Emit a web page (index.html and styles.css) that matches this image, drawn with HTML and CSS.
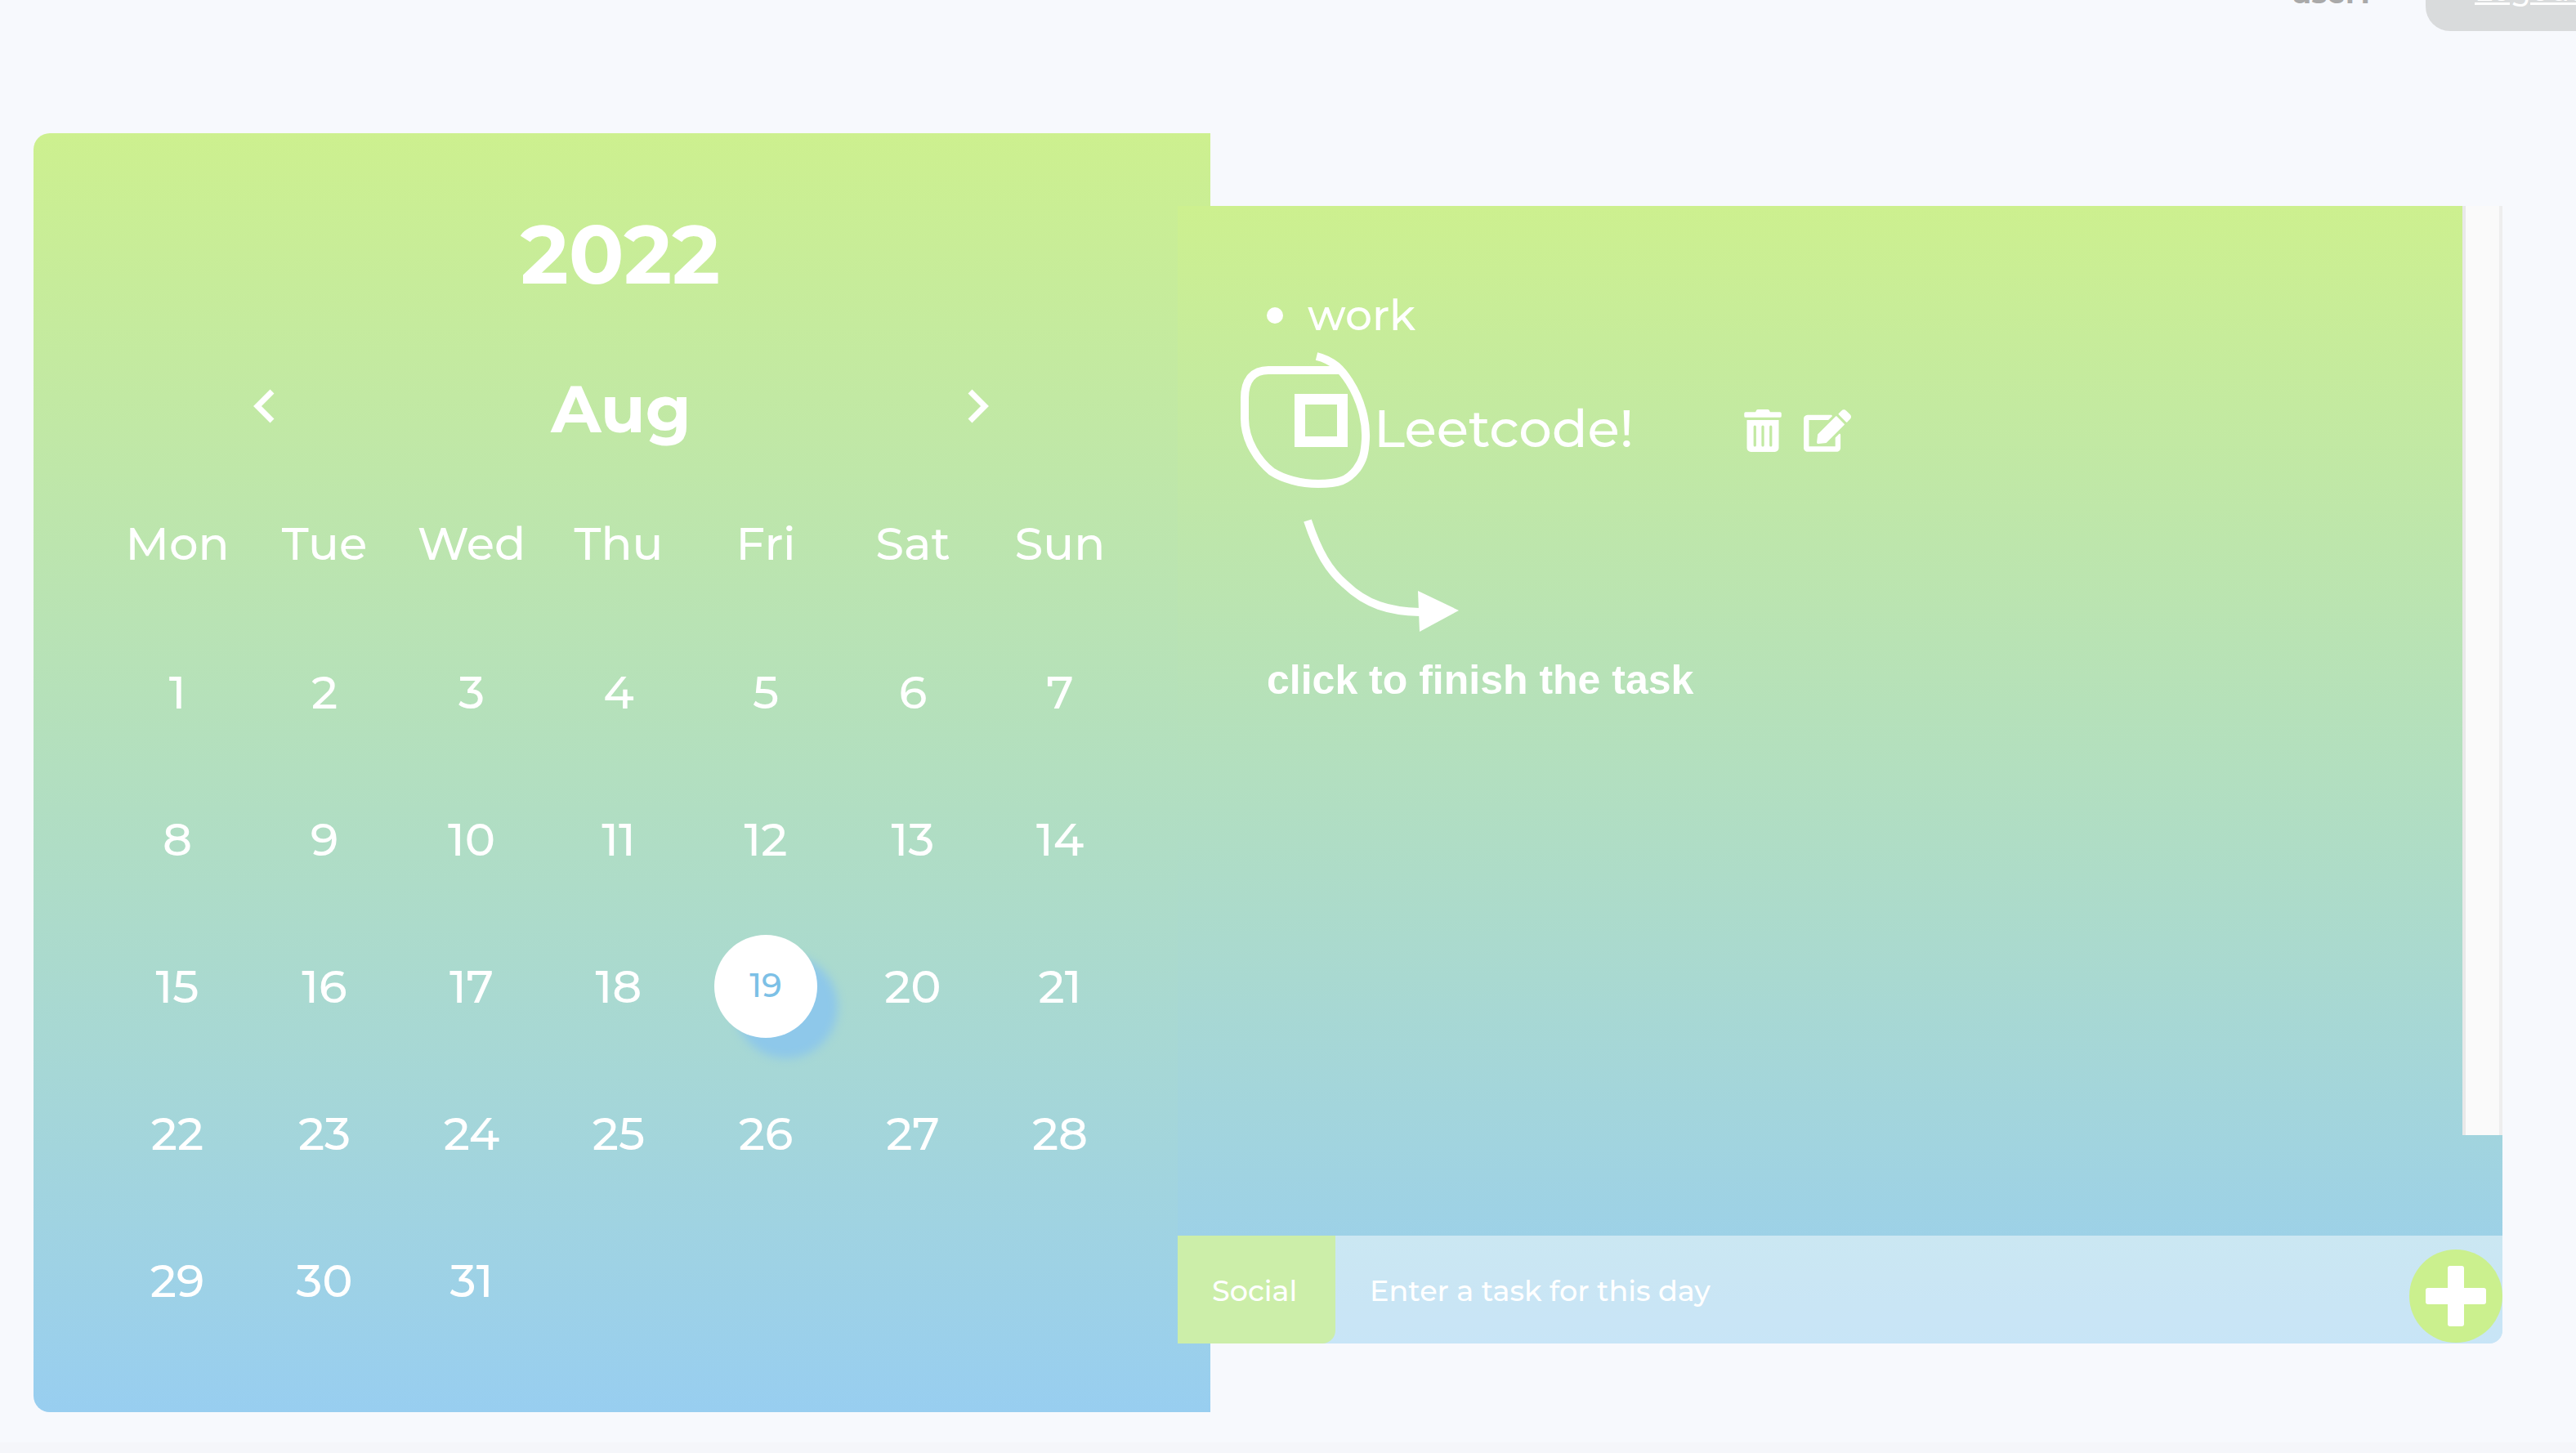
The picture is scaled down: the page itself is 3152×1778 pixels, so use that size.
FILE: index.html
```html
<!DOCTYPE html>
<html lang="en">
<head>
<meta charset="utf-8">
<meta name="viewport" content="width=device-width, initial-scale=1">
<title>Calendar tasks</title>
<link rel="stylesheet" href="styles.css">
</head>
<body>
<header class="topbar">
  <span class="user">user1</span>
  <a class="logout" href="#">Logout</a>
</header>
<main class="planner">
  <section class="calendar">
    <h1 class="year">2022</h1>
    <div class="month-nav">
      <button class="arrow" type="button" aria-label="Previous month"><svg viewBox="0 0 26 42"><path d="M23 3L5 21l18 18"/></svg></button>
      <h2 class="month">Aug</h2>
      <button class="arrow" type="button" aria-label="Next month"><svg viewBox="0 0 26 42"><path d="M3 3l18 18L3 39"/></svg></button>
    </div>
    <table class="days">
      <thead><tr><th>Mon</th><th>Tue</th><th>Wed</th><th>Thu</th><th>Fri</th><th>Sat</th><th>Sun</th></tr></thead>
      <tbody>
        <tr><td>1</td><td>2</td><td>3</td><td>4</td><td>5</td><td>6</td><td>7</td></tr>
        <tr><td>8</td><td>9</td><td>10</td><td>11</td><td>12</td><td>13</td><td>14</td></tr>
        <tr><td>15</td><td>16</td><td>17</td><td>18</td><td><span class="today">19</span></td><td>20</td><td>21</td></tr>
        <tr><td>22</td><td>23</td><td>24</td><td>25</td><td>26</td><td>27</td><td>28</td></tr>
        <tr><td>29</td><td>30</td><td>31</td><td></td><td></td><td></td><td></td></tr>
      </tbody>
    </table>
  </section>
  <section class="tasks">
    <div class="scroll-area">
      <div class="list">
        <h3 class="category">work</h3>
        <div class="task">
          <input class="check" type="checkbox" id="task-1">
          <label class="name" for="task-1">Leetcode!</label>
          <div class="actions">
            <button class="icon" type="button" aria-label="Delete"><svg width="46" height="52" viewBox="0 0 448 512"><path d="M32 464a48 48 0 0 0 48 48h288a48 48 0 0 0 48-48V128H32zm272-256a16 16 0 0 1 32 0v224a16 16 0 0 1-32 0zm-96 0a16 16 0 0 1 32 0v224a16 16 0 0 1-32 0zm-96 0a16 16 0 0 1 32 0v224a16 16 0 0 1-32 0zM432 32H312l-9.400-18.700A24 24 0 0 0 281.100 0H166.800a23.720 23.720 0 0 0-21.400 13.300L136 32H16A16 16 0 0 0 0 48v32a16 16 0 0 0 16 16h416a16 16 0 0 0 16-16V48a16 16 0 0 0-16-16z"/></svg></button>
            <button class="icon" type="button" aria-label="Edit"><svg width="58" height="52" viewBox="0 0 576 512"><path d="M402.600 83.200l90.200 90.200c3.800 3.800 3.800 10 0 13.800L274.400 405.600l-92.800 10.300c-12.400 1.400-22.900-9.100-21.500-21.500l10.300-92.800L388.800 83.200c3.800-3.800 10-3.800 13.800 0zm162-22.900l-48.800-48.800c-15.200-15.200-39.900-15.200-55.200 0l-35.400 35.400c-3.800 3.800-3.800 10 0 13.800l90.200 90.200c3.800 3.800 10 3.800 13.800 0l35.400-35.400c15.200-15.300 15.200-40 0-55.200zM384 346.200V448H64V128h229.800c3.200 0 6.200-1.300 8.500-3.500l40-40c7.600-7.600 2.200-20.500-8.500-20.500H48C21.500 64 0 85.500 0 112v352c0 26.500 21.500 48 48 48h352c26.500 0 48-21.500 48-48V306.200c0-10.700-12.900-16-20.500-8.500l-40 40c-2.200 2.300-3.500 5.300-3.500 8.500z"/></svg></button>
          </div>
        </div>
      </div>
      <div class="track"></div>
      <div class="hint">
        <svg class="sketch" width="280" height="360" viewBox="1510 422 280 360" aria-hidden="true">
          <path class="ink" d="M1611 436C1632 441 1642 453 1651 467C1665 489 1672 515 1671 537C1670 555 1668 563 1660 574C1649 588 1638 592 1613 592C1591 592 1570 586 1556 577C1540 564 1523 540 1523 512V487C1523 464 1534 453 1552 453H1641"/>
          <path class="ink" d="M1600 637C1613 676 1626 698 1646 715C1672 740 1700 748 1737 749"/>
          <path class="head" d="M1735 723L1785 747L1737 773Z"/>
        </svg>
        <p class="hint-text">click to finish the task</p>
      </div>
    </div>
    <form class="entry">
      <select class="kind" aria-label="Category"><option>Social</option><option>work</option></select>
      <input class="field" type="text" placeholder="Enter a task for this day" aria-label="New task">
      <button class="add" type="button" aria-label="Add task"><svg width="74" height="74" viewBox="0 0 74 74"><rect x="27" width="20" height="74" rx="3"/><rect y="27" width="74" height="20" rx="3"/></svg></button>
    </form>
  </section>
</main>
<footer class="foot"></footer>
</body>
</html>
```
FILE: styles.css
```css
:root {
  --fade: linear-gradient(180deg, #cdf08f, #98cef0);
  --page: #f7f9fd;
}
* { box-sizing: border-box; }
body {
  margin: 0;
  display: flex;
  flex-direction: column;
  min-height: 100vh;
  overflow: hidden;
  background: var(--page);
  color: #fff;
  font-family: Montserrat, Inter, sans-serif;
}
h1, h2, h3, p { margin: 0; }
button { border: 0; padding: 0; background: none; color: inherit; cursor: pointer; }

.topbar {
  display: flex;
  justify-content: flex-end;
  align-items: center;
  gap: 68px;
  height: 100px;
  margin: -62px -64px 0 0;
  font-size: 36px;
}
.user { color: #a9a9a9; font-weight: 700; padding-top: 6px; }
.logout {
  width: 248px;
  padding: 28px 60px;
  line-height: 44px;
  border-radius: 30px;
  background: #d9dbdc;
  color: #fff;
  font-weight: 500;
}

.planner {
  display: grid;
  grid-template-columns: 1400fr 1621fr;
  align-items: start;
  padding: 125px 90px 37px 41px;
}
.calendar {
  margin-right: -40px;
  padding: 88px 94px 71px 86px;
  border-radius: 20px 0 0 20px;
  background: var(--fade);
}
.year { padding-left: 4px; text-align: center; font-size: 100px; font-weight: 700; line-height: 120px; }
.month-nav {
  display: flex;
  align-items: center;
  justify-content: space-between;
  margin: 80px 0 22px;
  padding: 0 160px 0 166px;
}
.month { font-size: 80px; font-weight: 700; line-height: 100px; }
.arrow { display: flex; justify-content: center; width: 60px; padding-bottom: 8px; }
.arrow svg { width: 26px; height: 42px; fill: none; stroke: #fff; stroke-width: 7; }
.days { width: 100%; table-layout: fixed; border-collapse: collapse; font-size: 56px; }
.days th, .days td { height: 180px; padding: 0; text-align: center; font-weight: 500; }
.days th { height: 184px; }
.today {
  display: grid;
  place-items: center;
  width: 126px;
  height: 126px;
  margin: 0 auto;
  padding-bottom: 4px;
  border-radius: 50%;
  background: #fff;
  color: #7cc0e6;
  font-size: 40px;
  box-shadow: 25px 25px 12px #8ec8ea;
}

.tasks {
  position: relative;
  margin-top: 89px;
  border-radius: 0 0 16px 0;
  background: var(--fade);
}
.scroll-area { display: flex; min-height: 1137px; position: relative; }
.list { flex: 1; padding-top: 102px; }
.track {
  width: 49px;
  border-left: 4px solid #e9e9e9;
  border-right: 4px solid #eee;
  background: #fafafa;
}
.category {
  display: flex;
  align-items: center;
  gap: 30px;
  padding-left: 109px;
  font-size: 52px;
  font-weight: 500;
  line-height: 64px;
}
.category::before { content: ""; width: 20px; height: 20px; border-radius: 50%; background: #fff; }
.task { display: flex; align-items: baseline; margin-top: 64px; padding-left: 143px; }
.check { appearance: none; width: 65px; height: 65px; margin: 0 32px 0 0; border: 13px solid #fff; }
.name { width: 453px; font-size: 64px; font-weight: 500; line-height: 80px; }
.actions { display: flex; align-self: center; gap: 27px; padding-top: 8px; }
.icon { display: flex; }
.icon svg, .add svg { fill: #fff; }

.hint { position: absolute; left: 69px; top: 170px; }
.sketch { display: block; }
.ink { fill: none; stroke: #fff; stroke-width: 10; }
.head { fill: #fff; }
.hint-text {
  padding: 20px 0 0 40px;
  font: 700 50px/60px "Liberation Sans", Arial, sans-serif;
  white-space: nowrap;
}

.entry {
  display: flex;
  height: 132px;
  margin-top: 123px;
  border-radius: 0 0 16px 0;
  background: rgba(255, 255, 255, .47);
}
.kind, .field {
  appearance: none;
  border: 0;
  color: #fff;
  font: 500 35px Montserrat, Inter, sans-serif;
}
.kind { width: 193px; padding: 2px 42px 0; border-radius: 0 0 16px 0; background: #cceea9; }
.field { flex: 1; min-width: 0; padding: 2px 42px 0; background: none; }
.field::placeholder { color: #fff; opacity: 1; }
.add {
  display: grid;
  place-items: center;
  align-self: flex-end;
  width: 114px;
  height: 114px;
  margin-bottom: 1px;
  border-radius: 50%;
  background: #cbf08e;
}
.foot { flex: 1; background: #f5f6fa; }
```
